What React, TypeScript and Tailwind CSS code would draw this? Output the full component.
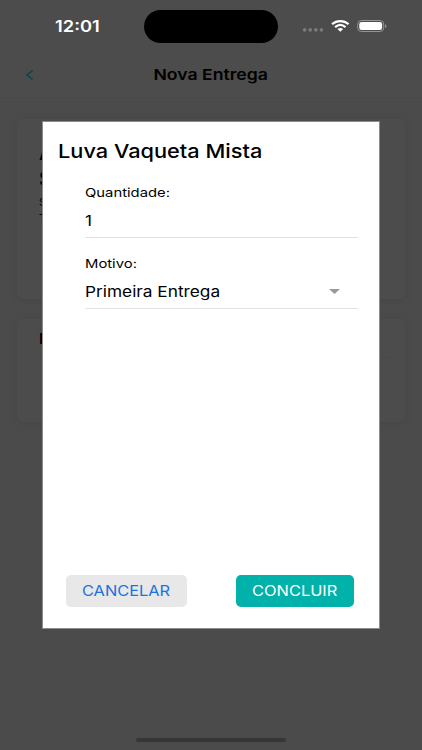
import React from "react";

const StatusBar = () => {
  return (
    <div className="relative flex h-[52px] w-full">
      <span className="absolute left-[54.5px] top-[16.5px] origin-left scale-x-[1.18] text-[15.5px] font-semibold leading-5 text-white">
        12:01
      </span>
      <div className="mx-auto mt-[10px] h-[33px] w-[134px] rounded-full bg-black"></div>
      <div className="absolute left-[302px] top-[19px] flex">
        <svg width="86" height="14" viewBox="0 0 86 14" fill="none">
          <g fill="#7b7b7b">
            <circle cx="2.6" cy="10.9" r="1.8" />
            <circle cx="8.2" cy="10.9" r="1.8" />
            <circle cx="13.8" cy="10.9" r="1.8" />
            <circle cx="19.4" cy="10.9" r="1.8" />
          </g>
          <g stroke="#fff" strokeWidth="2.2">
            <path d="M30 5.1C34.8 1 41.8 1 46.6 5.1" />
            <path d="M33.1 8.2C36.3 5.4 40.3 5.4 43.5 8.2" />
          </g>
          <path d="M35.4 10.1C37.2 8.5 39.4 8.5 41.2 10.1L38.3 12.8Z" fill="#fff" />
          <rect x="55.7" y="1.5" width="26" height="11" rx="3.6" stroke="#949494" />
          <rect x="57.3" y="3" width="22.8" height="8" rx="2.3" fill="#fff" />
          <path d="M83 5.2C85 5.8 85 8.4 83 9Z" fill="#949494" />
        </svg>
      </div>
    </div>
  );
};

const Modal = () => {
  return (
    <div className="absolute left-[42px] top-[121px] flex h-[508px] w-[338px] flex-col border border-[#8c8c8c] bg-white text-black">
      <h2 className="ml-[15px] mt-[17px] origin-left scale-x-[1.145] self-start whitespace-nowrap text-[19px] font-medium leading-[26px]">
        Luva Vaqueta Mista
      </h2>
      <div className="ml-[42px] mr-[21px] mt-[20px] flex h-[53px] flex-col items-start border-b border-[#e2e2e2]">
        <label className="origin-left scale-x-[1.235] text-[12px] leading-4">Quantidade:</label>
        <span className="mt-[10px] origin-left scale-x-[1.14] text-[15px] leading-5">1</span>
      </div>
      <div className="ml-[42px] mr-[21px] mt-[18px] flex h-[53px] flex-col items-start border-b border-[#e2e2e2]">
        <label className="origin-left scale-x-[1.235] text-[12px] leading-4">Motivo:</label>
        <div className="mt-[10px] flex w-full items-center justify-between">
          <span className="origin-left scale-x-[1.15] text-[15px] leading-5">Primeira Entrega</span>
          <svg className="mb-px mr-[18px]" width="11" height="5" viewBox="0 0 11 5">
            <path d="M0 0H11L5.5 5Z" fill="#999" />
          </svg>
        </div>
      </div>
      <div className="mb-[21px] ml-[23px] mr-[25px] mt-auto flex justify-between">
        <button className="flex h-8 w-[121px] items-center justify-center rounded-[5px] bg-[#e8e8e8] text-[14.5px] text-[#1a73e0]">
          <span className="scale-x-[1.13]">CANCELAR</span>
        </button>
        <button className="flex h-8 w-[118px] items-center justify-center rounded-[5px] bg-[#00b2a9] text-[14.5px] text-white">
          <span className="scale-x-[1.13]">CONCLUIR</span>
        </button>
      </div>
    </div>
  );
};

const App = () => {
  return (
    <div className="relative flex h-[750px] w-[422px] flex-col overflow-hidden bg-[#4b4b4b] font-['Inter',sans-serif]">
      <div className="h-[98px] border-b border-[#484848] bg-[#4c4c4c]">
        <StatusBar />
        <div className="relative flex h-[46px] items-center justify-center">
          <svg className="absolute left-[26px] top-[18px]" width="7" height="10" viewBox="0 0 7 10" fill="none">
            <path d="M6.5 0.6L1 5L6.5 9.4" stroke="#07474d" strokeWidth="1.5" />
          </svg>
          <h1 className="scale-x-[1.175] text-[15px] font-semibold leading-5 text-black">Nova Entrega</h1>
        </div>
      </div>
      <div className="mx-[17px] mt-[21px] flex h-[180px] flex-col rounded-md bg-[#4c4c4c] pl-[22px] pt-[21px] text-black shadow-[0_1px_7px_#464646]">
        <span className="text-[20px] font-semibold leading-[26px]">A</span>
        <span className="text-[20px] font-semibold leading-[26px]">S</span>
        <span className="mt-[3px] text-[11px] leading-[14px]">S</span>
        <span className="mt-[2px] text-[11px] leading-[14px]">T</span>
      </div>
      <div className="mx-[17px] mt-[20px] flex h-[103px] flex-col rounded-md bg-[#4c4c4c] pl-[22px] pt-[10px] text-black shadow-[0_1px_7px_#464646]">
        <span className="text-[15px] font-semibold leading-5">E</span>
        <div className="mr-[14px] mt-[8px] border-b border-[#484848]"></div>
      </div>
      <div className="mx-auto mb-[8px] mt-auto h-[4px] w-[150px] rounded-full bg-[#363636]"></div>
      <Modal />
    </div>
  );
};

export default App;
